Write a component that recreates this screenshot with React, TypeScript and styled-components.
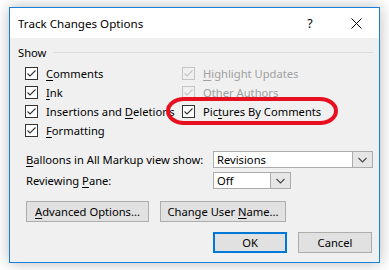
import React from 'react'
import styled, { createGlobalStyle } from 'styled-components'

const GlobalStyle = createGlobalStyle`
  body {
    margin: 0;
    background: #ffffff;
    font-family: "Noto Sans", "Open Sans", sans-serif;
    font-size: 11.2px;
    color: #000;
  }
`

const Page = styled.div`
  width: 389px;
  height: 270px;
  padding: 7px 0 0 9px;
  box-sizing: border-box;
`

const Dialog = styled.div`
  position: relative;
  width: 371px;
  height: 256px;
  box-sizing: border-box;
  border: 1px solid #1a7fd4;
  background: #f0f0f0;
  box-shadow: 0 0 14px rgba(0, 0, 0, 0.28);
  display: flex;
  flex-direction: column;
`

const TitleBar = styled.div`
  height: 30px;
  background: #ffffff;
  display: flex;
  align-items: center;
  padding-left: 8px;
  font-size: 11.6px;
`

const Title = styled.div`
  flex: 1;
`

const TitleButton = styled.div`
  width: 46px;
  height: 30px;
  display: flex;
  align-items: center;
  justify-content: center;
  font-size: 12.5px;
`

const Body = styled.div`
  flex: 1;
  padding: 6px 6px 0 8px;
  display: flex;
  flex-direction: column;
`

const GroupHeader = styled.div`
  display: flex;
  align-items: center;
  gap: 7px;
  height: 16px;

  &::after {
    content: '';
    flex: 1;
    height: 1px;
    background: #dcdcdc;
  }
`

const CheckGrid = styled.div`
  display: grid;
  grid-template-columns: 157px 1fr;
  grid-auto-flow: column;
  grid-template-rows: repeat(4, 19px);
  margin: 4px 0 0 7px;
`

const CheckRow = styled.div<{ $disabled?: boolean }>`
  display: flex;
  align-items: center;
  gap: 8px;
  white-space: nowrap;
  color: ${(p) => (p.$disabled ? '#a0a0a0' : '#000')};
`

const Box = styled.div<{ $disabled?: boolean }>`
  width: 13px;
  height: 13px;
  box-sizing: border-box;
  border: 1px solid ${(p) => (p.$disabled ? '#c4c4c4' : '#333')};
  background: ${(p) => (p.$disabled ? '#f0f0f0' : '#fff')};
  display: flex;
  align-items: center;
  justify-content: center;
  flex-shrink: 0;
`

const Key = styled.span`
  text-decoration: underline;
  text-underline-offset: 2px;
`

const Highlight = styled.div`
  position: absolute;
  left: 156px;
  top: 89px;
  width: 172px;
  height: 28px;
  box-sizing: border-box;
  border: 4px solid #e8101e;
  border-radius: 18px / 14px;
  pointer-events: none;
`

const FieldRow = styled.div`
  display: grid;
  grid-template-columns: 187px auto;
  align-items: center;
  padding-left: 8px;
  height: 21px;
  white-space: nowrap;
`

const Combo = styled.div<{ $w: number }>`
  width: ${(p) => p.$w}px;
  height: 17px;
  box-sizing: border-box;
  border: 1px solid #acacac;
  background: #fff;
  display: flex;
  align-items: center;
  padding-left: 3px;
`

const ComboText = styled.div`
  flex: 1;
`

const ComboArrow = styled.div`
  width: 19px;
  height: 15px;
  background: #e6e6e6;
  border-left: 1px solid #acacac;
  display: flex;
  align-items: center;
  justify-content: center;
`

const ButtonRow = styled.div<{ $end?: boolean }>`
  display: flex;
  gap: 11px;
  justify-content: ${(p) => (p.$end ? 'flex-end' : 'flex-start')};
  padding-left: ${(p) => (p.$end ? 0 : 8)}px;
  padding-right: ${(p) => (p.$end ? 1 : 0)}px;
`

const Button = styled.div<{ $w: number; $default?: boolean }>`
  width: ${(p) => p.$w}px;
  height: 21px;
  box-sizing: border-box;
  background: #e1e1e1;
  border: ${(p) => (p.$default ? '2px solid #0078d7' : '1px solid #adadad')};
  display: flex;
  align-items: center;
  justify-content: center;
  white-space: nowrap;
`

const Spacer = styled.div<{ $h: number }>`
  height: ${(p) => p.$h}px;
`

const Check = ({ disabled }: { disabled?: boolean }) => (
  <Box $disabled={disabled}>
    <svg width="11" height="11" viewBox="0 0 11 11">
      <path d="M1.5 5.5 L4 8 L9.5 2.5" fill="none" stroke={disabled ? '#c4c4c4' : '#333'} strokeWidth="1.1" />
    </svg>
  </Box>
)

const Chevron = () => (
  <svg width="9" height="6" viewBox="0 0 9 6">
    <path d="M0.5 1 L4.5 5 L8.5 1" fill="none" stroke="#444" strokeWidth="1.1" />
  </svg>
)

export default function App() {
  return (
    <Page>
      <GlobalStyle />
      <Dialog>
        <TitleBar>
          <Title>Track Changes Options</Title>
          <TitleButton>?</TitleButton>
          <TitleButton>
            <svg width="11" height="11" viewBox="0 0 11 11">
              <path d="M0.5 0.5 L10.5 10.5 M10.5 0.5 L0.5 10.5" stroke="#000" strokeWidth="1" />
            </svg>
          </TitleButton>
        </TitleBar>
        <Body>
          <GroupHeader>Show</GroupHeader>
          <CheckGrid>
            <CheckRow><Check /><span><Key>C</Key>omments</span></CheckRow>
            <CheckRow><Check /><span><Key>I</Key>nk</span></CheckRow>
            <CheckRow><Check /><span>Insertions and <Key>D</Key>eletions</span></CheckRow>
            <CheckRow><Check /><span><Key>F</Key>ormatting</span></CheckRow>
            <CheckRow $disabled><Check disabled /><span><Key>H</Key>ighlight Updates</span></CheckRow>
            <CheckRow $disabled><Check disabled /><span>Other Authors</span></CheckRow>
            <CheckRow><Check /><span>Pic<Key>t</Key>ures By Comments</span></CheckRow>
          </CheckGrid>
          <Spacer $h={9} />
          <FieldRow>
            <span><Key>B</Key>alloons in All Markup view show:</span>
            <Combo $w={160}>
              <ComboText>Revisions</ComboText>
              <ComboArrow><Chevron /></ComboArrow>
            </Combo>
          </FieldRow>
          <FieldRow>
            <span>Reviewing <Key>P</Key>ane:</span>
            <Combo $w={78}>
              <ComboText>Off</ComboText>
              <ComboArrow><Chevron /></ComboArrow>
            </Combo>
          </FieldRow>
          <Spacer $h={10} />
          <ButtonRow>
            <Button $w={123}><span><Key>A</Key>dvanced Options...</span></Button>
            <Button $w={126}><span>Change User <Key>N</Key>ame...</span></Button>
          </ButtonRow>
          <Spacer $h={10} />
          <ButtonRow $end>
            <Button $w={74} $default>OK</Button>
            <Button $w={74}>Cancel</Button>
          </ButtonRow>
        </Body>
        <Highlight />
      </Dialog>
    </Page>
  )
}
